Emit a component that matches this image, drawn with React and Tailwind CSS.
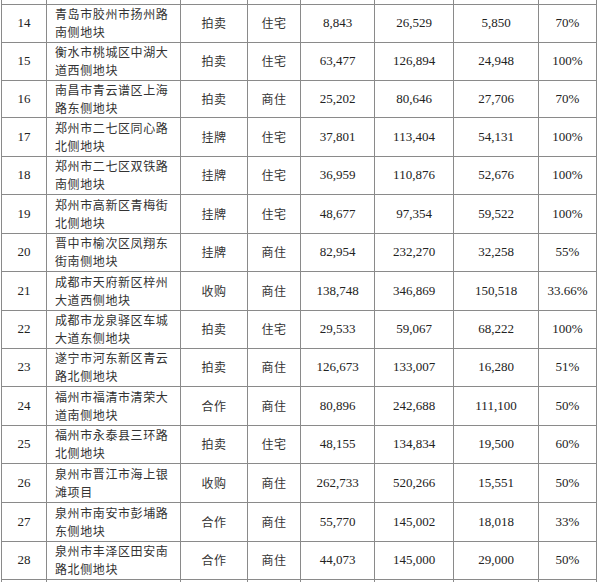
import React from "react";

const rows = [
  ["14", "青岛市胶州市扬州路", "南侧地块", "拍卖", "住宅", "8,843", "26,529", "5,850", "70%"],
  ["15", "衡水市桃城区中湖大", "道西侧地块", "拍卖", "住宅", "63,477", "126,894", "24,948", "100%"],
  ["16", "南昌市青云谱区上海", "路东侧地块", "拍卖", "商住", "25,202", "80,646", "27,706", "70%"],
  ["17", "郑州市二七区同心路", "北侧地块", "挂牌", "住宅", "37,801", "113,404", "54,131", "100%"],
  ["18", "郑州市二七区双铁路", "南侧地块", "挂牌", "住宅", "36,959", "110,876", "52,676", "100%"],
  ["19", "郑州市高新区青梅街", "北侧地块", "挂牌", "住宅", "48,677", "97,354", "59,522", "100%"],
  ["20", "晋中市榆次区凤翔东", "街南侧地块", "挂牌", "商住", "82,954", "232,270", "32,258", "55%"],
  ["21", "成都市天府新区梓州", "大道西侧地块", "收购", "商住", "138,748", "346,869", "150,518", "33.66%"],
  ["22", "成都市龙泉驿区车城", "大道东侧地块", "拍卖", "住宅", "29,533", "59,067", "68,222", "100%"],
  ["23", "遂宁市河东新区青云", "路北侧地块", "拍卖", "商住", "126,673", "133,007", "16,280", "51%"],
  ["24", "福州市福清市清荣大", "道南侧地块", "合作", "商住", "80,896", "242,688", "111,100", "50%"],
  ["25", "福州市永泰县三环路", "北侧地块", "拍卖", "住宅", "48,155", "134,834", "19,500", "60%"],
  ["26", "泉州市晋江市海上银", "滩项目", "收购", "商住", "262,733", "520,266", "15,551", "50%"],
  ["27", "泉州市南安市彭埔路", "东侧地块", "合作", "商住", "55,770", "145,002", "18,018", "33%"],
  ["28", "泉州市丰泽区田安南", "路北侧地块", "合作", "商住", "44,073", "145,000", "29,000", "50%"],
];

const heights = ["h-[38px]", "h-[38px]", "h-[37px]", "h-[39px]", "h-[38px]", "h-[39px]", "h-[38px]", "h-[39px]", "h-[38px]", "h-[38px]", "h-[39px]", "h-[38px]", "h-[39px]", "h-[39px]", "h-[38px]"];

const cjk = "font-['Noto_Sans_CJK_SC',sans-serif] text-[12px] tracking-[0.6px] text-[#333]";
const num = "font-['Liberation_Serif',serif] text-[13px] text-[#222]";
const cell = "border border-[#8a8a8a] p-0 align-middle";

export default function App() {
  return (
    <div className="w-[600px] h-[582px] overflow-hidden bg-white">
      <table className="table-fixed border-collapse ml-px w-[595px]">
        <colgroup>
          <col className="w-[45px]" />
          <col className="w-[134px]" />
          <col className="w-[67px]" />
          <col className="w-[53px]" />
          <col className="w-[74px]" />
          <col className="w-[79px]" />
          <col className="w-[85px]" />
          <col className="w-[58px]" />
        </colgroup>
        <tbody>
          <tr className="h-[4px]">
            {Array.from({ length: 8 }).map((_, i) => (
              <td key={i} className="border-x border-[#8a8a8a] p-0"></td>
            ))}
          </tr>
          {rows.map((r, i) => (
            <tr key={r[0]} className={heights[i]}>
              <td className={`${cell} ${num} text-center`}>{r[0]}</td>
              <td className={`${cell} ${cjk} text-left pl-[8px] leading-[18px] whitespace-nowrap`}>
                <div>{r[1]}</div>
                <div>{r[2]}</div>
              </td>
              <td className={`${cell} ${cjk} text-center`}>{r[3]}</td>
              <td className={`${cell} ${cjk} text-center`}>{r[4]}</td>
              <td className={`${cell} ${num} text-center`}>{r[5]}</td>
              <td className={`${cell} ${num} text-center`}>{r[6]}</td>
              <td className={`${cell} ${num} text-center`}>{r[7]}</td>
              <td className={`${cell} ${num} text-center`}>{r[8]}</td>
            </tr>
          ))}
          <tr className="h-[10px]">
            {Array.from({ length: 8 }).map((_, i) => (
              <td key={i} className="border-x border-[#8a8a8a] p-0"></td>
            ))}
          </tr>
        </tbody>
      </table>
    </div>
  );
}
